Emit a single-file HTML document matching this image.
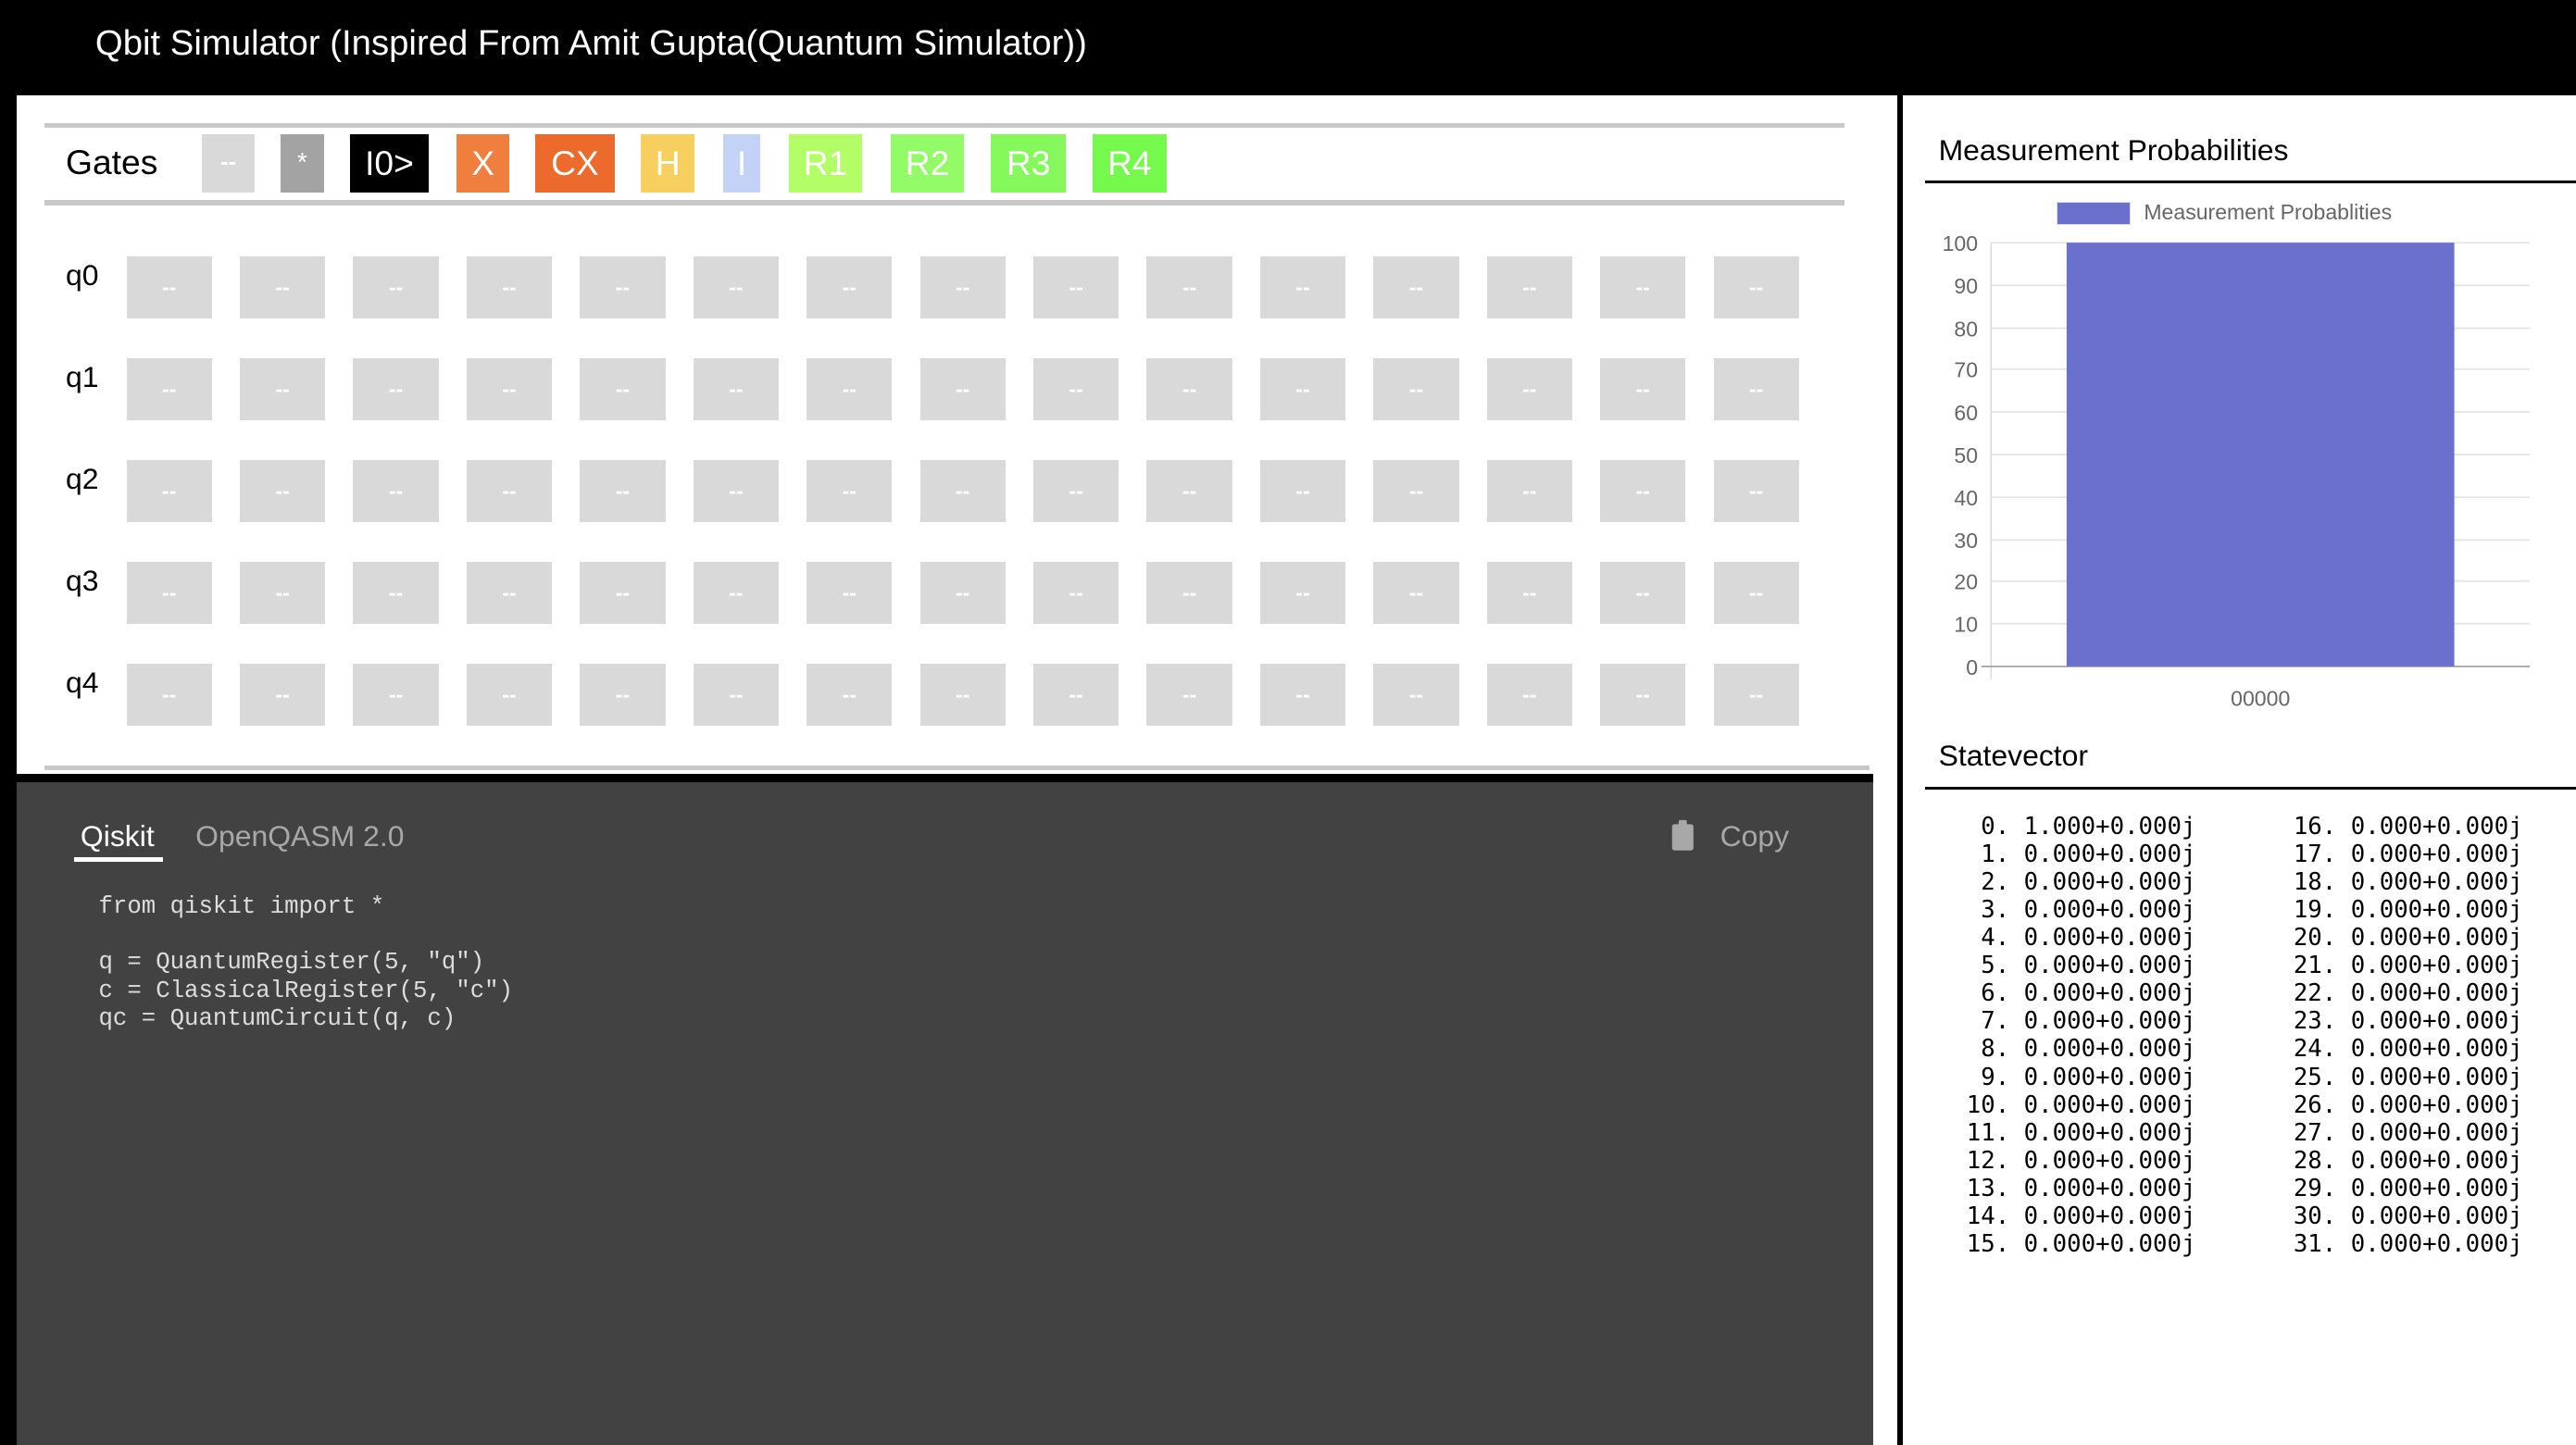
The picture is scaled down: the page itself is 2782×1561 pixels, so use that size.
<!DOCTYPE html>
<html><head><meta charset="utf-8"><style>
html,body{margin:0;padding:0;}
body{width:1568px;height:880px;zoom:1.77423;position:relative;overflow:hidden;background:#fff;font-family:"Liberation Sans",Arial,sans-serif;}
.a{position:absolute;}
.g{position:absolute;top:82px;height:35px;color:#fff;font-size:21px;line-height:35px;text-align:center;}
.c{position:absolute;width:52px;height:38px;background:#d9d9d9;color:#fff;font-size:13px;font-weight:bold;text-align:center;line-height:38px;}
.q{position:absolute;left:40px;font-size:18px;}
.sv{position:absolute;font-family:"DejaVu Sans Mono","Liberation Mono",monospace;font-size:14.5px;line-height:16.93px;white-space:pre;color:#000;}
</style></head><body>
<div class="a" style="left:0;top:0;width:1568px;height:58px;background:#000;"></div>
<div class="a" style="left:58px;top:14px;color:#fff;font-size:21.6px;">Qbit Simulator (Inspired From Amit Gupta(Quantum Simulator))</div>
<div class="a" style="left:0;top:58px;width:10px;height:822px;background:#000;"></div>
<div class="a" style="left:1155px;top:58px;width:3px;height:822px;background:#000;"></div>

<div class="a" style="left:27px;top:75px;width:1096px;height:3px;background:#c8c8c8;"></div>
<div class="a" style="left:27px;top:122px;width:1096px;height:3px;background:#c8c8c8;"></div>
<div class="a" style="left:40px;top:87px;font-size:21px;">Gates</div>
<div class="g" style="left:123px;width:32px;background:#d9d9d9;font-size:14px;font-weight:bold;">--</div>
<div class="g" style="left:171px;width:26px;background:#a3a3a3;font-size:16px;">*</div>
<div class="g" style="left:213px;width:48px;background:#000;">I0&gt;</div>
<div class="g" style="left:278px;width:32px;background:#ef7e3f;">X</div>
<div class="g" style="left:326px;width:48px;background:#ec6a2c;">CX</div>
<div class="g" style="left:390px;width:33px;background:#f7cf5f;">H</div>
<div class="g" style="left:440px;width:23px;background:#c5d2f8;">I</div>
<div class="g" style="left:480px;width:45px;background:#b3fd67;">R1</div>
<div class="g" style="left:542px;width:45px;background:#93fb67;">R2</div>
<div class="g" style="left:603px;width:46px;background:#85f95c;">R3</div>
<div class="g" style="left:665px;width:45px;background:#75f94c;">R4</div>

<div id="grid"></div>
<div class="q" style="top:157px;">q0</div>
<div class="q" style="top:219px;">q1</div>
<div class="q" style="top:281px;">q2</div>
<div class="q" style="top:343px;">q3</div>
<div class="q" style="top:405px;">q4</div>
<script>
var h='';for(var r=0;r<5;r++)for(var c=0;c<15;c++)h+='<div class="c" style="left:'+(77+c*69)+'px;top:'+(156+r*62)+'px">--</div>';
document.getElementById('grid').innerHTML=h;
</script>
<div class="a" style="left:27px;top:466px;width:1111px;height:3px;background:#c8c8c8;"></div>
<div class="a" style="left:10px;top:471px;width:1130px;height:5px;background:#000;"></div>
<div class="a" style="left:10px;top:476px;width:1130px;height:404px;background:#424242;"></div>
<div class="a" style="left:49px;top:499px;color:#fff;font-size:18px;">Qiskit</div>
<div class="a" style="left:45px;top:522px;width:54px;height:3px;background:#fff;"></div>
<div class="a" style="left:119px;top:499px;color:#a8a8a8;font-size:18px;">OpenQASM 2.0</div>
<svg class="a" style="left:1017px;top:499px;" width="15" height="20" viewBox="0 0 15 20"><rect x="1" y="3" width="13" height="16" rx="1.5" fill="#a8a8a8"/><rect x="5" y="0.5" width="5" height="4" rx="1" fill="#a8a8a8"/></svg>
<div class="a" style="left:1047px;top:499px;color:#a8a8a8;font-size:18px;">Copy</div>
<div class="a" style="left:60px;top:544px;color:#ddd;font-family:'Liberation Mono',monospace;font-size:14.5px;line-height:17px;white-space:pre;">from qiskit import *

q = QuantumRegister(5, "q")
c = ClassicalRegister(5, "c")
qc = QuantumCircuit(q, c)</div>

<div class="a" style="left:1180px;top:81px;font-size:18px;">Measurement Probabilities</div>
<div class="a" style="left:1172px;top:110px;width:396px;height:1.5px;background:#000;"></div>
<div class="a" style="left:1252px;top:123px;width:44px;height:13px;background:#6b70cc;border:1px solid #ddd;"></div>
<div class="a" style="left:1305px;top:122px;font-size:13px;color:#666;">Measurement Probablities</div>
<svg class="a" style="left:1160px;top:140px;" width="408" height="300">
<g stroke="#e5e5e5" stroke-width="1">
<line x1="52" y1="8" x2="380" y2="8"/><line x1="52" y1="34" x2="380" y2="34"/><line x1="52" y1="60" x2="380" y2="60"/><line x1="52" y1="85" x2="380" y2="85"/><line x1="52" y1="111" x2="380" y2="111"/><line x1="52" y1="137" x2="380" y2="137"/><line x1="52" y1="163" x2="380" y2="163"/><line x1="52" y1="189" x2="380" y2="189"/><line x1="52" y1="214" x2="380" y2="214"/><line x1="52" y1="240" x2="380" y2="240"/>
<line x1="52" y1="8" x2="52" y2="274" stroke="#ddd"/></g>
<line x1="46" y1="266" x2="380" y2="266" stroke="#aaa"/>
<rect x="98" y="8" width="236" height="258" fill="#6b70cc"/>
<g font-family="Liberation Sans,Arial,sans-serif" font-size="13" fill="#666" text-anchor="end">
<text x="44" y="13">100</text><text x="44" y="39">90</text><text x="44" y="65">80</text><text x="44" y="90">70</text><text x="44" y="116">60</text><text x="44" y="142">50</text><text x="44" y="168">40</text><text x="44" y="194">30</text><text x="44" y="219">20</text><text x="44" y="245">10</text><text x="44" y="271">0</text></g>
<text x="216" y="290" font-family="Liberation Sans,Arial,sans-serif" font-size="13" fill="#666" text-anchor="middle">00000</text>
</svg>
<div class="a" style="left:1180px;top:450px;font-size:18px;">Statevector</div>
<div class="a" style="left:1172px;top:479px;width:396px;height:1.5px;background:#000;"></div>
<div id="sv"></div>
<script>
var a='',b='';
for(var i=0;i<16;i++){a+=(i<10?' ':'')+i+'. '+(i==0?'1':'0')+'.000+0.000j\n';}
for(var i=16;i<32;i++){b+=i+'. 0.000+0.000j\n';}
document.getElementById('sv').innerHTML='<div class="sv" style="left:1197px;top:495px;">'+a+'</div><div class="sv" style="left:1396px;top:495px;">'+b+'</div>';
</script>
</body></html>
